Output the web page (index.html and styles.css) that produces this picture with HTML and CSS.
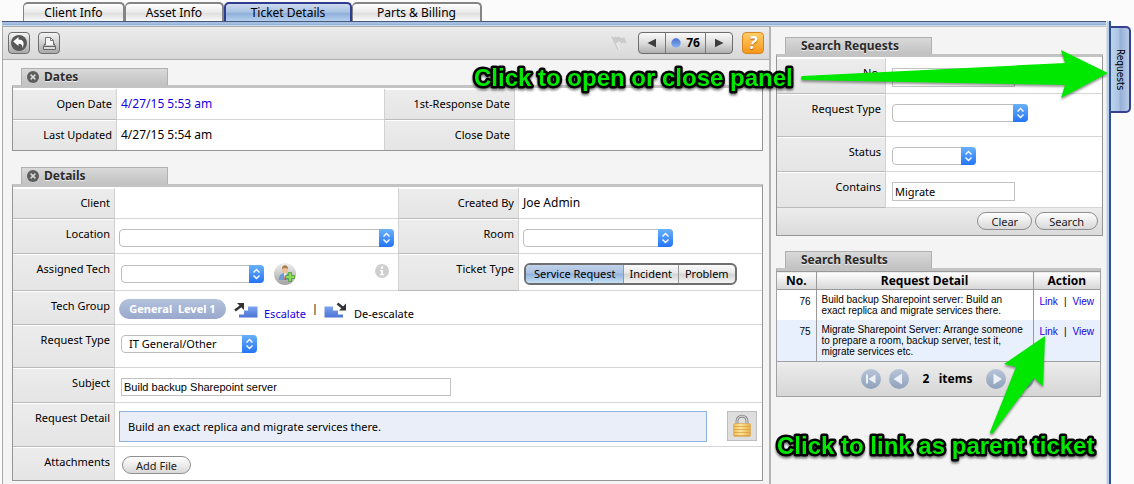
FILE: index.html
```html
<!DOCTYPE html>
<html lang="en">
<head>
<meta charset="utf-8">
<title>Ticket Details</title>
<link rel="stylesheet" href="styles.css">
</head>
<body>
<svg class="defs" aria-hidden="true">
  <defs>
    <linearGradient id="stair" x1="0" y1="0" x2="0" y2="1"><stop offset="0" stop-color="#7da3f0"/><stop offset="1" stop-color="#4c74d4"/></linearGradient>
    <linearGradient id="ball" x1="0" y1="0" x2="0" y2="1"><stop offset="0" stop-color="#4a6fd0"/><stop offset="1" stop-color="#86b2f4"/></linearGradient>
    <linearGradient id="disc" x1="0" y1="0" x2="0" y2="1"><stop offset="0" stop-color="#b7c5d9"/><stop offset="1" stop-color="#8fa1bb"/></linearGradient>
    <linearGradient id="silver" x1="0" y1="0" x2="0" y2="1"><stop offset="0" stop-color="#f0f0f0"/><stop offset="1" stop-color="#a2a2a2"/></linearGradient>
    <linearGradient id="gold" x1="0" y1="0" x2="1" y2="0"><stop offset="0" stop-color="#eebb55"/><stop offset=".4" stop-color="#ffe69a"/><stop offset="1" stop-color="#eab04a"/></linearGradient>
    <symbol id="chevrons" viewBox="0 0 15 18"><path d="M4.5 7.5 7.5 4.5l3 3M4.5 10.5l3 3 3-3" fill="none" stroke="#fff" stroke-width="1.4"/></symbol>
    <symbol id="close" viewBox="0 0 12 12"><circle cx="6" cy="6" r="6" fill="#5d5d5d"/><path d="M3.6 3.6l4.8 4.8M8.4 3.6 3.6 8.4" stroke="#d8d8d8" stroke-width="1.5"/></symbol>
  </defs>
</svg>
<div class="page">
  <div class="main">
    <nav class="tabs">
      <a class="tab tab-client" href="#">Client Info</a>
      <a class="tab tab-asset" href="#">Asset Info</a>
      <a class="tab tab-ticket active" href="#">Ticket Details</a>
      <a class="tab tab-parts" href="#">Parts &amp; Billing</a>
    </nav>
    <div class="frame">
      <main class="ticket">
        <div class="toolbar">
          <button class="tool" aria-label="Back"><svg width="20" height="20" viewBox="0 0 20 20"><circle cx="10" cy="10" r="8" fill="#595959"/><path d="M4.200 8.500 9.500 4v2.600c4.500 0 6.500 3 4.100 8.600.1-3.300-1.500-4.600-4.100-4.500V13z" fill="#fff"/></svg></button>
          <button class="tool" aria-label="Print"><svg width="20" height="20" viewBox="0 0 20 20"><path d="M6.500 12V4.500h5l3 3V12" fill="#f6f6f6" stroke="#777"/><path d="M11.500 4.500v3h3" fill="none" stroke="#777"/><path d="M6 10.500 4.500 13.500h12L15 10.500" fill="none" stroke="#666"/><path d="M4.500 13.500h12v3h-12z" fill="#d9d9d9" stroke="#666"/></svg></button>
          <svg class="flag" width="16" height="16" viewBox="0 0 16 16"><path d="M1 1.500 7 14.500" stroke="#c8c8c8" stroke-width="1.400"/><path d="M2.500 1.500 8.500 14.500" stroke="#f2f2f2"/><path d="M2 2.500c3-2 4 .5 6.500-1l1 1.500c2 .3 3-1.500 4-.5l2 5c-2 1.500-3-.5-5 1l-1.500-2C7 6 6 8 5 8.500z" fill="#cbcbcb"/></svg>
          <div class="pager">
            <button aria-label="Previous ticket"><svg width="10" height="10" viewBox="0 0 10 10"><path d="M9 .8v8.400L.5 5z" fill="#3d3d3d"/></svg></button>
            <span class="current"><svg width="10" height="10" viewBox="0 0 10 10"><circle cx="5" cy="5" r="4.700" fill="url(#ball)"/></svg>76</span>
            <button aria-label="Next ticket"><svg width="10" height="10" viewBox="0 0 10 10"><path d="M1 .8v8.400L9.500 5z" fill="#3d3d3d"/></svg></button>
          </div>
          <button class="help" aria-label="Help">?</button>
        </div>

        <section class="section">
          <h2 class="heading"><svg width="12" height="12"><use href="#close"/></svg>Dates</h2>
          <div class="box grid dates">
            <div class="label">Open Date</div><div class="value text blue">4/27/15 5:53 am</div>
            <div class="label split">1st-Response Date</div><div class="value"></div>
            <div class="label">Last Updated</div><div class="value text">4/27/15 5:54 am</div>
            <div class="label split">Close Date</div><div class="value"></div>
          </div>
        </section>

        <section class="section">
          <h2 class="heading"><svg width="12" height="12"><use href="#close"/></svg>Details</h2>
          <div class="box grid details">
            <div class="label">Client</div><div class="value"></div>
            <div class="label split">Created By</div><div class="value text near">Joe Admin</div>

            <label class="label" for="location">Location</label>
            <div class="value near"><span class="select w-location"><select id="location"><option></option></select><svg width="15" height="18"><use href="#chevrons"/></svg></span></div>
            <label class="label split" for="room">Room</label>
            <div class="value near"><span class="select w-room"><select id="room"><option></option></select><svg width="15" height="18"><use href="#chevrons"/></svg></span></div>

            <label class="label" for="tech">Assigned Tech</label>
            <div class="value assigned"><span class="select w-tech"><select id="tech"><option></option></select><svg width="15" height="18"><use href="#chevrons"/></svg></span>
              <button class="plain" aria-label="Assign tech"><svg width="22" height="22" viewBox="0 0 22 22"><circle cx="11" cy="11" r="11" fill="url(#silver)"/><path d="M5 17c0-5 2-7 6-7s5 2 5 7z" fill="#6f9bd2"/><path d="M10 10h2.500l-.5 7h-1.500z" fill="#fff"/><path d="M11 11l1.200 6h-2z" fill="#b8473c"/><ellipse cx="11" cy="6.800" rx="3.100" ry="3.800" fill="#e9bf98"/><path d="M8 6c0-5 6-5 6.200 0-2-1.500-4-1.500-6.200 0z" fill="#a97a4c"/><path d="M14.500 9.500h3v3h3v3h-3v3h-3v-3h-3v-3h3z" fill="#8bd95c" stroke="#4a9c31" stroke-width=".8"/></svg></button>
              <svg class="info" width="14" height="14" viewBox="0 0 14 14"><circle cx="7" cy="7" r="7" fill="#cfcfcf"/><circle cx="7" cy="3.600" r="1.300" fill="#fff"/><path d="M5 6h3v4h1v1.200H5V10h1V7.200H5z" fill="#fff"/></svg>
            </div>
            <div class="label split">Ticket Type</div>
            <div class="value near types"><div class="segments"><button class="on" aria-pressed="true">Service Request</button><button>Incident</button><button>Problem</button></div></div>

            <div class="label">Tech Group</div>
            <div class="value wide near group">
              <span class="pill">General&nbsp; Level 1</span>
              <a class="step escalate" href="#"><svg width="24" height="16" viewBox="0 0 24 16"><path d="M1 8.500 7 4" stroke="#333" stroke-width="2.500"/><path d="M3 1h7v7L8 6 5 3z" fill="#333"/><path d="M5 15.500V12.500h5V8.500h4V4.500h9.500v11z" fill="url(#stair)"/></svg>Escalate</a>
              <span class="bar"></span>
              <a class="step deescalate" href="#"><svg width="24" height="16" viewBox="0 0 24 16"><path d="M0.500 4.500H9V8.500h5v4h5v3H.5z" fill="url(#stair)"/><path d="M13.500 1.500 19 6" stroke="#333" stroke-width="2.500"/><path d="M22 1.500v7h-7l2-2 3-3z" fill="#333"/></svg>De-escalate</a>
            </div>

            <label class="label" for="rtype">Request Type</label>
            <div class="value wide tall"><span class="select w-type"><select id="rtype"><option>IT General/Other</option></select><svg width="15" height="18"><use href="#chevrons"/></svg></span></div>

            <label class="label" for="subject">Subject</label>
            <div class="value wide"><input class="field subject" id="subject" type="text" value="Build backup Sharepoint server"></div>

            <div class="label">Request Detail</div>
            <div class="value wide near detail"><div class="note">Build an exact replica and migrate services there.</div>
              <button class="lock" aria-label="Visibility"><svg width="20" height="24" viewBox="0 0 20 24"><path d="M5 12V7c0-6.500 10-6.500 10 0v5" fill="none" stroke="#8d8d8d" stroke-width="3"/><path d="M5 12V7c0-6.500 10-6.500 10 0v5" fill="none" stroke="#dedede" stroke-width="1"/><rect x="1.500" y="9.500" width="17" height="13" rx="1.500" fill="url(#gold)" stroke="#d6a24a" stroke-width=".6"/><path d="M2 12.500h16M2 15.500h16M2 18.500h16M2 21.500h16" stroke="#d49a3c" stroke-width=".7"/></svg></button>
            </div>

            <div class="label">Attachments</div>
            <div class="value wide attach"><button class="round">Add File</button></div>
          </div>
        </section>
      </main>

      <aside class="requests">
        <section class="section">
          <h2 class="heading indent">Search Requests</h2>
          <form class="box">
            <div class="grid search">
              <label class="label" for="no">No.</label><div class="value"><input class="field" id="no" type="text"></div>
              <label class="label" for="stype">Request Type</label><div class="value tall"><span class="select w-type"><select id="stype"><option></option></select><svg width="15" height="18"><use href="#chevrons"/></svg></span></div>
              <label class="label" for="status">Status</label><div class="value"><span class="select w-status"><select id="status"><option></option></select><svg width="15" height="18"><use href="#chevrons"/></svg></span></div>
              <label class="label" for="contains">Contains</label><div class="value"><input class="field lucida" id="contains" type="text" value="Migrate"></div>
            </div>
            <div class="actions"><button class="round" type="button">Clear</button><button class="round" type="button">Search</button></div>
          </form>
        </section>
        <section class="section">
          <h2 class="heading indent">Search Results</h2>
          <div class="results">
            <table>
              <thead><tr><th class="c-no">No.</th><th>Request Detail</th><th class="c-act">Action</th></tr></thead>
              <tbody>
                <tr><td class="num">76</td><td>Build backup Sharepoint server: Build an exact replica and migrate services there.</td><td class="act"><a href="#">Link</a><span>|</span><a href="#">View</a></td></tr>
                <tr class="alt"><td class="num">75</td><td>Migrate Sharepoint Server: Arrange someone to prepare a room, backup server, test it, migrate services etc.</td><td class="act"><a href="#">Link</a><span>|</span><a href="#">View</a></td></tr>
              </tbody>
            </table>
            <div class="paging">
              <button class="plain" aria-label="First"><svg width="20" height="20" viewBox="0 0 20 20"><circle cx="10" cy="10" r="10" fill="url(#disc)"/><path d="M5 5.500h2v9H5zM14.500 5.500v9L7.500 10z" fill="#edf1f7"/></svg></button>
              <button class="plain" aria-label="Previous"><svg width="20" height="20" viewBox="0 0 20 20"><circle cx="10" cy="10" r="10" fill="url(#disc)"/><path d="M13 4.500v11L4.500 10z" fill="#edf1f7"/></svg></button>
              <span class="count">2&nbsp;&nbsp; items</span>
              <button class="plain" aria-label="Next"><svg width="20" height="20" viewBox="0 0 20 20"><circle cx="10" cy="10" r="10" fill="url(#disc)"/><path d="M7.500 4.500v11L16 10z" fill="#edf1f7"/></svg></button>
              <button class="plain" aria-label="Last"><svg width="20" height="20" viewBox="0 0 20 20"><circle cx="10" cy="10" r="10" fill="url(#disc)"/><path d="M13 5.500h2v9h-2zM5.500 5.500v9l7-4.500z" fill="#edf1f7"/></svg></button>
            </div>
          </div>
        </section>
      </aside>
    </div>
  </div>
  <div class="side"><button class="side-tab">Requests</button></div>
</div>
<svg class="notes" width="1134" height="484" viewBox="0 0 1134 484">
  <g class="arrows">
    <path d="M802 76Q800 78 802 80L1065 85 1061 98 1108 73 1061 50 1065 63z"/>
    <path d="M990 432Q990 435 993 433L1034 378 1043 386 1045 336 1004 364 1016 367z"/>
  </g>
  <text x="474" y="86">Click to open or close panel</text>
  <text x="777" y="454">Click to link as parent ticket</text>
</svg>
</body>
</html>
```
FILE: styles.css
```css
* { box-sizing: border-box; }
body {
  margin: 0;
  background: #fbfbfb;
  color: #000;
  font: 12px/16px "Noto Sans", "Open Sans", sans-serif;
}
button, input, select { font: inherit; color: inherit; margin: 0; }
button { padding: 0; cursor: pointer; }
a { color: #1500e0; text-decoration: none; }
svg { display: block; flex: none; }
.defs { position: absolute; width: 0; height: 0; }

.page { display: flex; min-height: 100vh; overflow: hidden; }
.main { flex: 1; display: flex; flex-direction: column; padding-left: 2px; min-width: 0; }
.side { width: 23px; padding-top: 26px; }
.side-tab {
  display: block;
  width: 20px;
  height: 87px;
  border: 2px solid #35418e;
  border-left: 0;
  border-radius: 0 5px 5px 0;
  background: linear-gradient(90deg, #bcd4ec, #a9c3e2 45%, #94afd6 50%, #b9cbe6);
  font: 10px/16px "DejaVu Sans Condensed", "DejaVu Sans", sans-serif;
  writing-mode: vertical-rl;
}

.tabs { display: flex; height: 21px; padding: 2px 0 0 21px; }
.tab {
  border: 2px solid #858585;
  border-bottom: 0;
  border-left-width: 1px;
  border-radius: 5px 5px 0 0;
  background: linear-gradient(#fff, #e9e9e9 50%, #dedede 55%, #fafafa);
  color: #000;
  line-height: 17px;
  text-align: center;
}
.tab-client { width: 102px; }
.tab-asset { width: 99px; }
.tab-ticket { width: 128px; }
.tab-parts { width: 130px; }
.tab.active { border-color: #2f3b8c; border-left-width: 2px; background: linear-gradient(#cfdcee, #a5bfe1 50%, #8fafd9 55%, #b5d0ee); }

.frame {
  flex: 1;
  display: flex;
  padding-top: 5px;
  padding-right: 5px;
  background:
    linear-gradient(90deg, #dfe3ea 0 1px, #b4d0ea 1px 3px, #33518c 3px 5px) right / 5px 100% no-repeat,
    linear-gradient(#46597a 0 1px, #a4bfe2 1px 3px, #95b2d6 3px 4px, #c3dcf0 4px 5px) top / 100% 5px no-repeat;
}
.ticket {
  flex: 1;
  min-width: 0;
  background: #f4f4f4;
  border: 1px solid #a8a8a8;
  border-right-width: 2px;
  border-right-color: #b4b4b4;
  border-bottom: 0;
}
.requests { width: 335px; padding: 3px 2px 0 0; border-top: 1px solid #c4c4c4; background: #f4f4f4; }

.toolbar {
  display: flex;
  align-items: center;
  gap: 8px;
  height: 33px;
  padding: 0 5px;
  border-bottom: 1px solid #adadad;
  background: linear-gradient(#ececec, #d9d9d9);
}
.tool, .pager, .help { height: 22px; border: 1px solid #6d6d6d; border-radius: 4px; }
.tool { width: 22px; background: linear-gradient(#f5f5f5, #a9a9a9); }
.flag { margin-left: auto; margin-right: 3px; }
.pager { display: flex; width: 95px; margin-right: 1px; overflow: hidden; background: linear-gradient(#fafafa, #dcdcdc 50%, #b0b0b0); }
.pager button { display: flex; width: 26px; align-items: center; justify-content: center; border: 0; background: none; }
.current { flex: 1; display: flex; align-items: center; justify-content: center; gap: 5px; border: solid #777; border-width: 0 1px; font-weight: bold; }
.help { width: 22px; border-color: #d98520; background: linear-gradient(#ffce68, #f8971a); color: #fff; font: bold italic 17px/18px "Open Sans", sans-serif; text-shadow: 0 1px 1px #a65c00; }

.section { padding: 8px 6px 0 9px; }
.section + .section { padding-top: 16px; }
.heading {
  display: flex;
  align-items: center;
  gap: 5px;
  width: 147px;
  height: 17px;
  margin: 0 0 0 9px;
  padding-left: 5px;
  border: 1px solid #b0b0b0;
  border-bottom: 0;
  background: linear-gradient(#d9d9d9, #c2c2c2);
  color: #2b2b2b;
  font-size: 12px;
  font-weight: bold;
  text-shadow: 0 1px 0 #eee;
}
.heading.indent { padding-left: 15px; }
.box { border: solid #959595; border-width: 3px 1px 1px; border-top-color: #c3c3c3; background: #fff; }
.grid { display: grid; padding-top: 1px; }
.dates { grid-template-columns: 104px 27fr 131px 25fr; }
.details { grid-template-columns: 102px 284fr 121px 244fr; }
.search { grid-template-columns: 109px 1fr; }

.label {
  padding: 7px 4px 7px 0;
  border-right: 1px solid #d2d2d2;
  border-bottom: 1px solid #bababa;
  background: linear-gradient(#fff 0 1px, #ececec 1px, #e5e5e5);
  font-size: 11px;
  text-align: right;
  white-space: nowrap;
}
.label.split { border-left: 1px solid #d2d2d2; }
.value { padding: 10px 6px 6px; border-bottom: 1px solid #d6d6d6; min-width: 0; }
.value.text { padding: 7px 4px; }
.value.near { padding-left: 4px; padding-right: 4px; }
.value.wide { grid-column: 2 / -1; }
.value.tall { padding-bottom: 14px; }
.dates > :nth-last-child(-n+4), .details > :nth-last-child(-n+2) { border-bottom: 0; }
.blue { color: #1500e0; }

.select { display: grid; max-width: 100%; }
.select > * { grid-area: 1 / 1; }
.select select {
  width: 100%;
  height: 18px;
  padding: 0 18px 0 7px;
  border: 1px solid #bdbdbd;
  border-radius: 4px;
  appearance: none;
  background: #fff;
  font-size: 11px;
}
.select svg { justify-self: end; border-radius: 0 4px 4px 0; background: linear-gradient(#69b1fa, #2474f8); pointer-events: none; }
.w-location { width: 275px; }
.w-room { width: 150px; }
.w-tech { width: 143px; }
.w-type { width: 136px; }
.w-status { width: 84px; }

.field {
  display: block;
  width: 123px;
  height: 19px;
  padding: 0 2px;
  border: 1px solid #c2c2c2;
  background: #fff;
  font: 11px/16px "Liberation Sans", Arial, sans-serif;
}
.field.subject { width: 330px; max-width: 100%; height: 18px; }
.field.lucida { font: 11px/16px "Noto Sans", sans-serif; }

.plain { border: 0; background: none; }
.value.assigned { display: flex; align-items: center; gap: 10px; padding-top: 9px; padding-bottom: 5px; }
.info { margin: 0 3px 6px auto; }
.value.types { padding: 9px 4px 5px; }
.segments { display: inline-flex; height: 22px; margin-left: 1px; border: 2px solid #6f6f6f; border-radius: 6px; background: linear-gradient(#fbfbfb, #e8e8e8 45%, #d4d4d4 50%, #f4f4f4); overflow: hidden; }
.segments button { padding: 0 6px; border: 0; border-left: 1px solid #999; background: none; font-size: 11px; white-space: nowrap; }
.segments .on { padding: 0 7px 0 8px; border-left: 0; background: linear-gradient(#c2d2ea, #a9c2e4 45%, #94b3dd 50%, #c4e0f4); }

.value.group { display: flex; gap: 8px; padding-top: 8px; padding-bottom: 5px; }
.pill { width: 107px; height: 20px; border-radius: 10px; background: linear-gradient(#b4c2dc, #98a8cc); color: #fff; font-size: 11px; font-weight: bold; line-height: 19px; text-align: center; }
.step { display: flex; gap: 6px; height: 20px; font-size: 11px; line-height: 30px; white-space: nowrap; }
.step svg { margin-top: 3px; }
.deescalate { color: #000; }
.bar { width: 2px; height: 11px; margin-top: 5px; background: #b8935a; }

.value.detail { display: flex; gap: 20px; padding: 8px 5px 4px 4px; }
.note { flex: 1; padding: 7px 8px; height: 31px; border: 1px solid #8fb2de; background: #e9eef8; font-size: 11px; }
.lock { display: grid; place-items: center; width: 30px; height: 30px; border: 1px solid #bebebe; background: #dedede; }
.value.attach { padding-top: 9px; }
.round { height: 18px; padding: 0 13px; border: 1px solid #8f8f8f; border-radius: 9px; background: linear-gradient(#fff, #d8d8d8); font-size: 11px; line-height: 15px; color: #222; }
.value.attach .round { display: block; margin-left: 1px; }

.requests .section { padding: 7px 1px 0 5px; }
.requests .section + .section { padding-top: 15px; }
.actions { display: flex; justify-content: flex-end; gap: 3px; padding: 4px 4px 5px; background: linear-gradient(#ececec, #dbdbdb); }

.results { margin-right: 2px; border: solid #a2a2a2; border-width: 3px 1px 1px; border-top-color: #c3c3c3; }
table { width: 100%; border-collapse: collapse; table-layout: fixed; background: #fff; font: 10px/11px "Liberation Sans", Arial, sans-serif; }
th { height: 18px; padding: 0; border: solid #999; border-width: 1px 0 1px 1px; background: linear-gradient(#fff, #d6d6d6); font: bold 12px/16px "Noto Sans", sans-serif; }
td { padding: 4px 5px; border-left: 1px solid #999; vertical-align: top; }
th:first-child, td:first-child { border-left: 0; }
.c-no { width: 39px; }
.c-act { width: 67px; }
.alt { background: #e9f0fd; }
.num { padding-top: 6px; text-align: right; }
.act { padding: 6px 0; text-align: center; white-space: nowrap; }
.act span { margin: 0 6px; }
.paging { display: flex; align-items: center; justify-content: center; gap: 8px; height: 35px; padding-left: 18px; border-top: 1px solid #a2a2a2; background: linear-gradient(#ececec, #d6d6d6); }
.count { padding: 0 6px; font-weight: bold; }

.notes { position: absolute; left: 0; top: 0; pointer-events: none; }
.notes text {
  fill: #00e800;
  stroke: #000;
  stroke-width: 5px;
  stroke-linejoin: round;
  paint-order: stroke;
  font: bold 24px "Liberation Sans", Arial, sans-serif;
  filter: drop-shadow(0 2px 1px rgba(0, 0, 0, .5));
}
.arrows { fill: #00e800; filter: drop-shadow(0 2px 1px rgba(0, 0, 0, .4)); }
```
